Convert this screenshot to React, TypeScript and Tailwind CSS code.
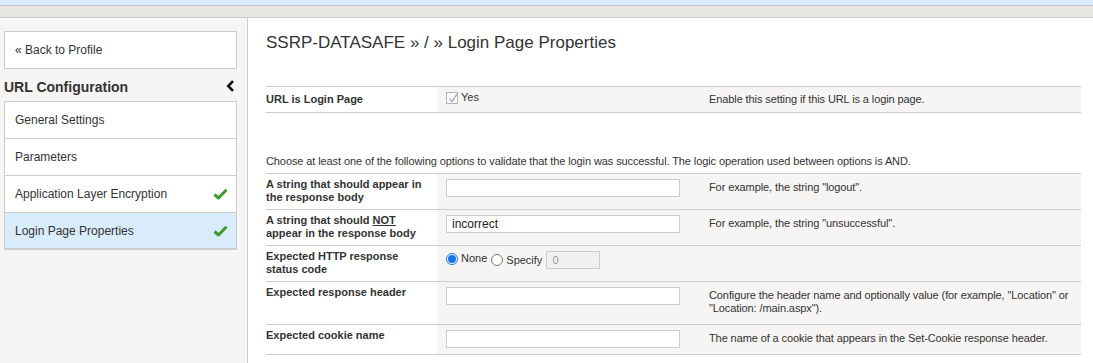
import React from 'react';

const font = "font-['Liberation_Sans',Arial,sans-serif]";

function Check() {
  return (
    <svg width="15" height="12" viewBox="0 0 15 12" className="shrink-0">
      <path d="M1.5 6.5 L5.5 10 L13.5 1.8" fill="none" stroke="#3d9a2b" strokeWidth="3" strokeLinejoin="round" />
    </svg>
  );
}

function NavItem({ label, done, active }: { label: string; done?: boolean; active?: boolean }) {
  return (
    <div
      className={`flex h-[37px] items-center justify-between border-b border-[#cccccc] pl-[10px] pr-[8px] text-[12px] text-[#333] last:border-b-2 ${
        active ? 'bg-[#d9ecfb]' : 'bg-white'
      }`}
    >
      <span>{label}</span>
      {done && <Check />}
    </div>
  );
}

function Sidebar() {
  return (
    <aside className="w-[248px] shrink-0 border-r border-[#cccccc] bg-[#f6f5f3] pt-[13px] pl-[4px] pr-[10px]">
      <div className="flex h-[38px] items-center border border-[#cccccc] bg-white pl-[10px] text-[12px] text-[#333]">
        « Back to Profile
      </div>
      <div className="flex h-[32px] items-center justify-between pr-[2px] pt-[4px]">
        <span className="text-[14px] font-bold text-[#333]">URL Configuration</span>
        <svg width="9" height="12" viewBox="0 0 9 12" className="-mt-[3px]">
          <path d="M7 1.2 L2.2 6 L7 10.8" fill="none" stroke="#111" strokeWidth="2.6" />
        </svg>
      </div>
      <div className="border-x border-t border-[#cccccc]">
        <NavItem label="General Settings" />
        <NavItem label="Parameters" />
        <NavItem label="Application Layer Encryption" done />
        <NavItem label="Login Page Properties" done active />
      </div>
    </aside>
  );
}

function TextBox({ value }: { value?: string }) {
  return (
    <div className="flex h-[18px] w-[234px] items-center border border-[#cccccc] bg-white pl-[5px] text-[12px] text-[#222]">
      {value}
    </div>
  );
}

type Row = {
  label: React.ReactNode;
  field: React.ReactNode;
  desc?: React.ReactNode;
};

function FormRow({ label, field, desc }: Row) {
  return (
    <div className="grid grid-cols-[171px_263px_1fr] border-b border-[#cccccc]">
      <div className="pt-[4px] pb-[5px] pr-2 text-[11px] font-bold leading-[13px] text-[#333]">{label}</div>
      <div className="bg-[#f6f5f3] pt-[5px] pb-[4px] pl-[9px]">{field}</div>
      <div className="whitespace-nowrap bg-[#f6f5f3] pt-[7px] pb-[9px] pl-[9px] text-[11px] leading-[13px] tracking-[-0.1px] text-[#333]">
        {desc}
      </div>
    </div>
  );
}

function Radio({ checked }: { checked?: boolean }) {
  return (
    <span
      className={`inline-flex h-[12px] w-[12px] items-center justify-center rounded-full border ${
        checked ? 'border-[#1a73e8]' : 'border-[#767676]'
      } bg-white`}
    >
      {checked && <span className="h-[8px] w-[8px] rounded-full bg-[#1a73e8]" />}
    </span>
  );
}

export default function App() {
  return (
    <div className={`${font} flex h-[363px] w-[1093px] flex-col overflow-hidden bg-white`}>
      <div className="h-[6px] shrink-0 border-b border-[#c8c8c8] bg-[#daecfb]" />
      <div className="h-[12px] shrink-0 border-b border-[#cccccc] bg-[#e8e6e2]" />
      <div className="flex flex-1">
        <Sidebar />
        <main className="flex-1 pl-[18px] pt-[14px]">
          <h1 className="text-[17px] leading-[22px] text-[#333]">SSRP-DATASAFE » / » Login Page Properties</h1>

          <div className="mt-[32px] w-[815px] border-y border-[#cccccc]">
            <div className="grid grid-cols-[171px_263px_1fr]">
              <div className="flex h-[25px] items-center text-[11px] font-bold text-[#333]">URL is Login Page</div>
              <div className="flex items-center gap-[3px] bg-[#f6f5f3] pl-[9px] text-[11px] text-[#333]">
                <span className="relative -mt-[3px] inline-block h-[12px] w-[12px] border border-[#b5b5b5] bg-[#f8f8f8]">
                  <svg width="10" height="10" viewBox="0 0 10 10" className="absolute left-[1px] top-0">
                    <path d="M1.5 5.5 L4 8.5 L9 1" fill="none" stroke="#9a9a9a" strokeWidth="1.1" />
                  </svg>
                </span>
                <span className="-mt-[4px]">Yes</span>
              </div>
              <div className="flex items-center bg-[#f6f5f3] pl-[9px] text-[11px] tracking-[-0.1px] text-[#333]">
                Enable this setting if this URL is a login page.
              </div>
            </div>
          </div>

          <p className="mt-[42px] text-[11px] leading-[13px] tracking-[-0.1px] text-[#333]">
            Choose at least one of the following options to validate that the login was successful. The logic operation used between options is AND.
          </p>

          <div className="mt-[5px] w-[815px] border-t border-[#cccccc]">
            <FormRow
              label={<>A string that should appear in<br />the response body</>}
              field={<TextBox />}
              desc={'For example, the string "logout".'}
            />
            <FormRow
              label={<>A string that should <span className="underline">NOT</span><br />appear in the response body</>}
              field={<TextBox value="incorrect" />}
              desc={'For example, the string "unsuccessful".'}
            />
            <FormRow
              label={<>Expected HTTP response<br />status code</>}
              field={
                <div className="flex h-[18px] items-center text-[11px] text-[#333]">
                  <span className="-mt-[3px] flex items-center">
                    <Radio checked />
                    <span className="ml-[3px]">None</span>
                  </span>
                  <span className="ml-[4px] flex items-center">
                    <Radio />
                    <span className="ml-[3px]">Specify</span>
                  </span>
                  <div className="ml-[4px] flex h-[18px] w-[54px] items-center border border-[#cccccc] bg-[#f0f0f0] pl-[5px] text-[11px] text-[#999]">
                    0
                  </div>
                </div>
              }
            />
            <FormRow
              label="Expected response header"
              field={<TextBox />}
              desc={<>Configure the header name and optionally value (for example, "Location" or<br />"Location: /main.aspx").</>}
            />
            <FormRow
              label="Expected cookie name"
              field={<TextBox />}
              desc="The name of a cookie that appears in the Set-Cookie response header."
            />
          </div>
        </main>
      </div>
    </div>
  );
}
